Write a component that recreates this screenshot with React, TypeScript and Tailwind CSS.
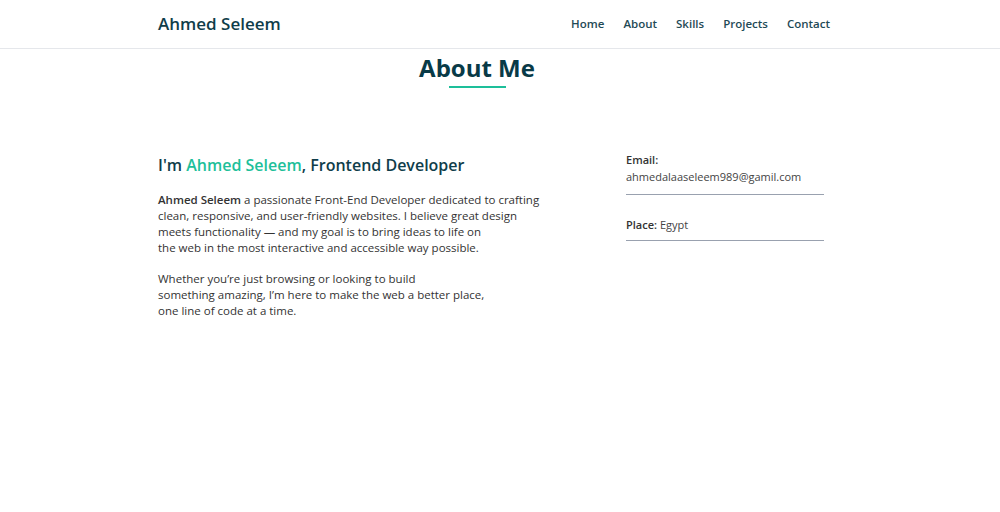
import React from 'react';

const navLinks = ['Home', 'About', 'Skills', 'Projects', 'Contact'];

export default function App() {
  return (
    <div className="min-h-screen bg-white text-[#333] font-['Open_Sans',sans-serif]">
      {/* Header */}
      <header className="border-b border-gray-200">
        <div className="mx-auto w-[684px] pr-[12px] h-12 flex items-center justify-between">
          <span className="text-[17px] font-semibold text-[#0f3d4a] -mt-[1px]">Ahmed Seleem</span>
          <nav className="flex gap-[19px] text-[11.5px] font-semibold text-[#1f4a56]">
            {navLinks.map((l) => (
              <a key={l} href="#">{l}</a>
            ))}
          </nav>
        </div>
      </header>

      {/* About */}
      <section className="mx-auto w-[684px] pr-[18px]">
        <div className="flex flex-col items-center pr-[28px] pt-[3px]">
          <h2 className="text-[24px] font-bold text-[#083a47] leading-[32px]">About Me</h2>
          <div className="w-[57px] h-[2px] bg-[#1dbf9a] mt-[2px]" />
        </div>

        <div className="flex justify-between items-start mt-[65px]">
          <div className="w-[400px]">
            <h3 className="text-[16px] font-semibold text-[#0f3d4a] leading-6">
              I'm <span className="text-[#1dbf9a]">Ahmed Seleem</span>, Frontend Developer
            </h3>
            <p className="mt-[15px] text-[11.5px] leading-4 text-[#333]">
              <strong className="font-semibold">Ahmed Seleem</strong> a passionate Front-End Developer dedicated to crafting<br />
              clean, responsive, and user-friendly websites. I believe great design<br />
              meets functionality — and my goal is to bring ideas to life on<br />
              the web in the most interactive and accessible way possible.
            </p>
            <p className="mt-[15px] text-[11.5px] leading-4 text-[#333]">
              Whether you’re just browsing or looking to build<br />
              something amazing, I’m here to make the web a better place,<br />
              one line of code at a time.
            </p>
          </div>

          <div className="w-[198px] -mt-[1px] text-[11px]">
            <div className="border-b border-gray-400 pb-[9px]">
              <p className="font-semibold text-[#333]">Email:</p>
              <p className="text-[#444]">ahmedalaaseleem989@gamil.com</p>
            </div>
            <div className="border-b border-gray-400 pt-[22px] pb-[6px]">
              <p className="text-[#444]">
                <span className="font-semibold text-[#333]">Place:</span> Egypt
              </p>
            </div>
          </div>
        </div>
      </section>
    </div>
  );
}
